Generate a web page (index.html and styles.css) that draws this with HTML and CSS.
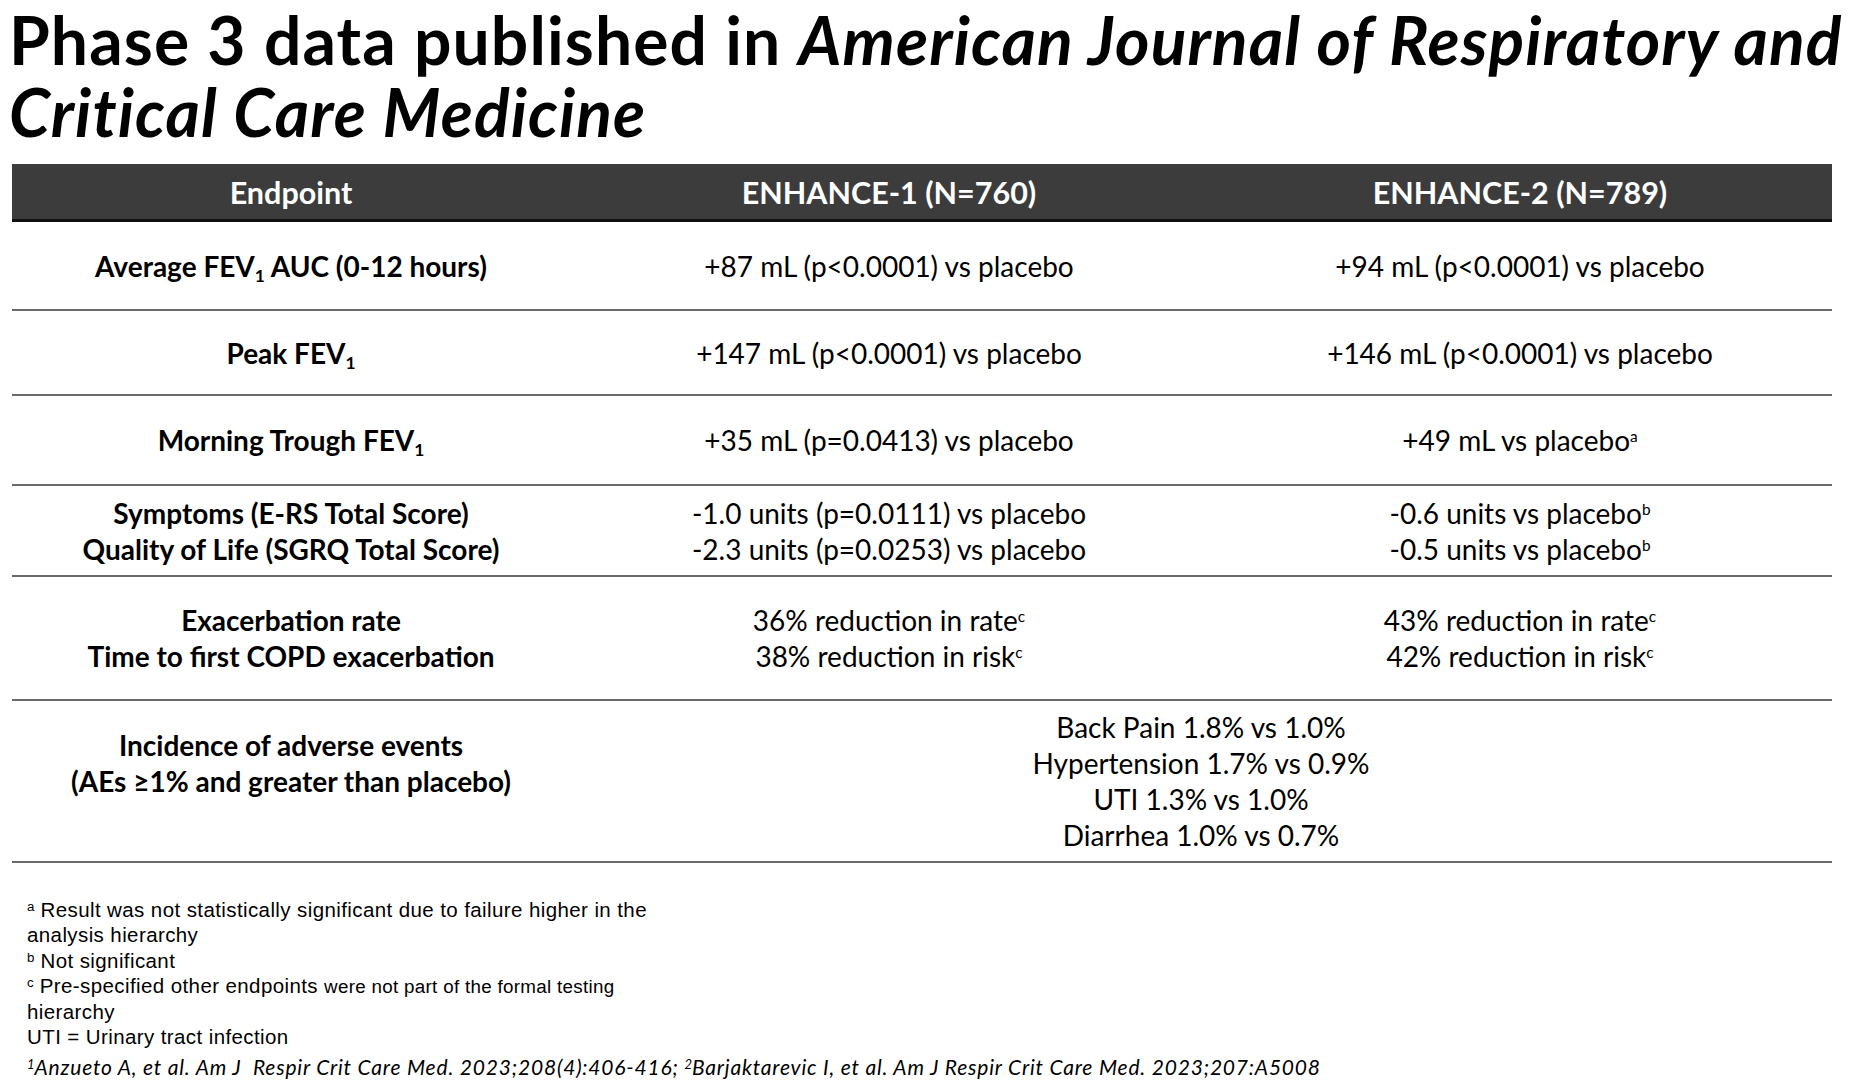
FILE: index.html
```html
<!DOCTYPE html>
<html lang="en">
<head>
<meta charset="utf-8">
<title>Phase 3 data</title>
<link rel="stylesheet" href="styles.css">
</head>
<body>
<h1 class="title">Phase 3 data published in <em>American Journal of Respiratory and<br>Critical Care Medicine</em></h1>

<div class="table">
  <div class="row head">
    <div class="cell">Endpoint</div>
    <div class="cell">ENHANCE-1 (N=760)</div>
    <div class="cell">ENHANCE-2 (N=789)</div>
  </div>
  <div class="row r1">
    <div class="cell key">Average FEV<sub>1</sub> AUC (0-12 hours)</div>
    <div class="cell">+87 mL (p&lt;0.0001) vs placebo</div>
    <div class="cell">+94 mL (p&lt;0.0001) vs placebo</div>
  </div>
  <div class="row r2">
    <div class="cell key">Peak FEV<sub>1</sub></div>
    <div class="cell">+147 mL (p&lt;0.0001) vs placebo</div>
    <div class="cell">+146 mL (p&lt;0.0001) vs placebo</div>
  </div>
  <div class="row r3">
    <div class="cell key">Morning Trough FEV<sub>1</sub></div>
    <div class="cell">+35 mL (p=0.0413) vs placebo</div>
    <div class="cell">+49 mL vs placebo<sup>a</sup></div>
  </div>
  <div class="row r4">
    <div class="cell key">Symptoms (E-RS Total Score)<br>Quality of Life (SGRQ Total Score)</div>
    <div class="cell">-1.0 units (p=0.0111) vs placebo<br>-2.3 units (p=0.0253) vs placebo</div>
    <div class="cell">-0.6 units vs placebo<sup>b</sup><br>-0.5 units vs placebo<sup>b</sup></div>
  </div>
  <div class="row r5">
    <div class="cell key">Exacerbation rate<br>Time to first COPD exacerbation</div>
    <div class="cell">36% reduction in rate<sup>c</sup><br>38% reduction in risk<sup>c</sup></div>
    <div class="cell">43% reduction in rate<sup>c</sup><br>42% reduction in risk<sup>c</sup></div>
  </div>
  <div class="row r6">
    <div class="cell key raised">Incidence of adverse events<br>(AEs ≥1% and greater than placebo)</div>
    <div class="cell span">Back Pain 1.8% vs 1.0%<br>Hypertension 1.7% vs 0.9%<br>UTI 1.3% vs 1.0%<br>Diarrhea 1.0% vs 0.7%</div>
  </div>
</div>

<div class="notes">
  <p><sup>a</sup> Result was not statistically significant due to failure higher in the<br>analysis hierarchy</p>
  <p><sup>b</sup> Not significant</p>
  <p><sup>c</sup> Pre-specified other endpoints <span class="tight">were not part of the formal testing</span><br>hierarchy</p>
  <p>UTI = Urinary tract infection</p>
</div>
<p class="cite"><sup>1</sup>Anzueto A, et al. Am J&nbsp; Respir Crit Care Med. 2023;208(4):406-416; <sup>2</sup>Barjaktarevic I, et al. Am J Respir Crit Care Med. 2023;207:A5008</p>
</body>
</html>
```

FILE: styles.css
```css
html, body {
  margin: 0;
  padding: 0;
  background: #ffffff;
  color: #000000;
}

body {
  width: 1852px;
  height: 1090px;
  overflow: hidden;
  font-family: Lato, "Open Sans", sans-serif;
}

.title {
  margin: 0;
  padding: 4px 0 0 9px;
  font-family: Lato, sans-serif;
  font-weight: 700;
  font-size: 66px;
  letter-spacing: 1.1px;
  line-height: 72px;
  white-space: nowrap;
}

.title em {
  font-style: italic;
}

.table {
  margin: 16px 0 0 12px;
  width: 1820px;
}

.row {
  display: grid;
  grid-template-columns: 558px 638px 624px;
  align-items: center;
  box-sizing: border-box;
  border-bottom: 2px solid #6a6a6a;
}

.cell {
  text-align: center;
  font-size: 28px;
  line-height: 36px;
}

.key {
  font-weight: 700;
}

.raised {
  padding-bottom: 36px;
}

.span {
  grid-column: 2 / 4;
}

.head {
  height: 58px;
  background: #3c3c3c;
  border-bottom: 3px solid #111111;
  color: #ffffff;
}

.head .cell {
  font-weight: 700;
  font-size: 30.5px;
}

.r1 { height: 89px; }
.r2 { height: 85px; }
.r3 { height: 90px; }
.r4 { height: 91px; }
.r5 { height: 124px; }
.r6 { height: 162px; }

sub {
  font-size: 0.62em;
  vertical-align: -0.3em;
  line-height: 0;
}

.cell sup {
  font-size: 0.55em;
  vertical-align: 0.6em;
  line-height: 0;
}

.notes {
  margin: 34px 0 0 27px;
  font-family: "Liberation Sans", Arial, sans-serif;
  font-size: 20.5px;
  letter-spacing: 0.4px;
  line-height: 25.3px;
}

.notes p {
  margin: 0;
}

.notes sup {
  font-size: 0.65em;
  vertical-align: 0.45em;
  line-height: 0;
  letter-spacing: 0;
}

.tight {
  font-size: 18.8px;
  letter-spacing: 0.3px;
}

.cite {
  margin: 4px 0 0 27px;
  font-family: Lato, sans-serif;
  font-style: italic;
  font-size: 21px;
  letter-spacing: 0.8px;
  line-height: 26px;
}

.cite sup {
  font-size: 0.62em;
  vertical-align: 0.5em;
  line-height: 0;
  letter-spacing: 0;
}
```
